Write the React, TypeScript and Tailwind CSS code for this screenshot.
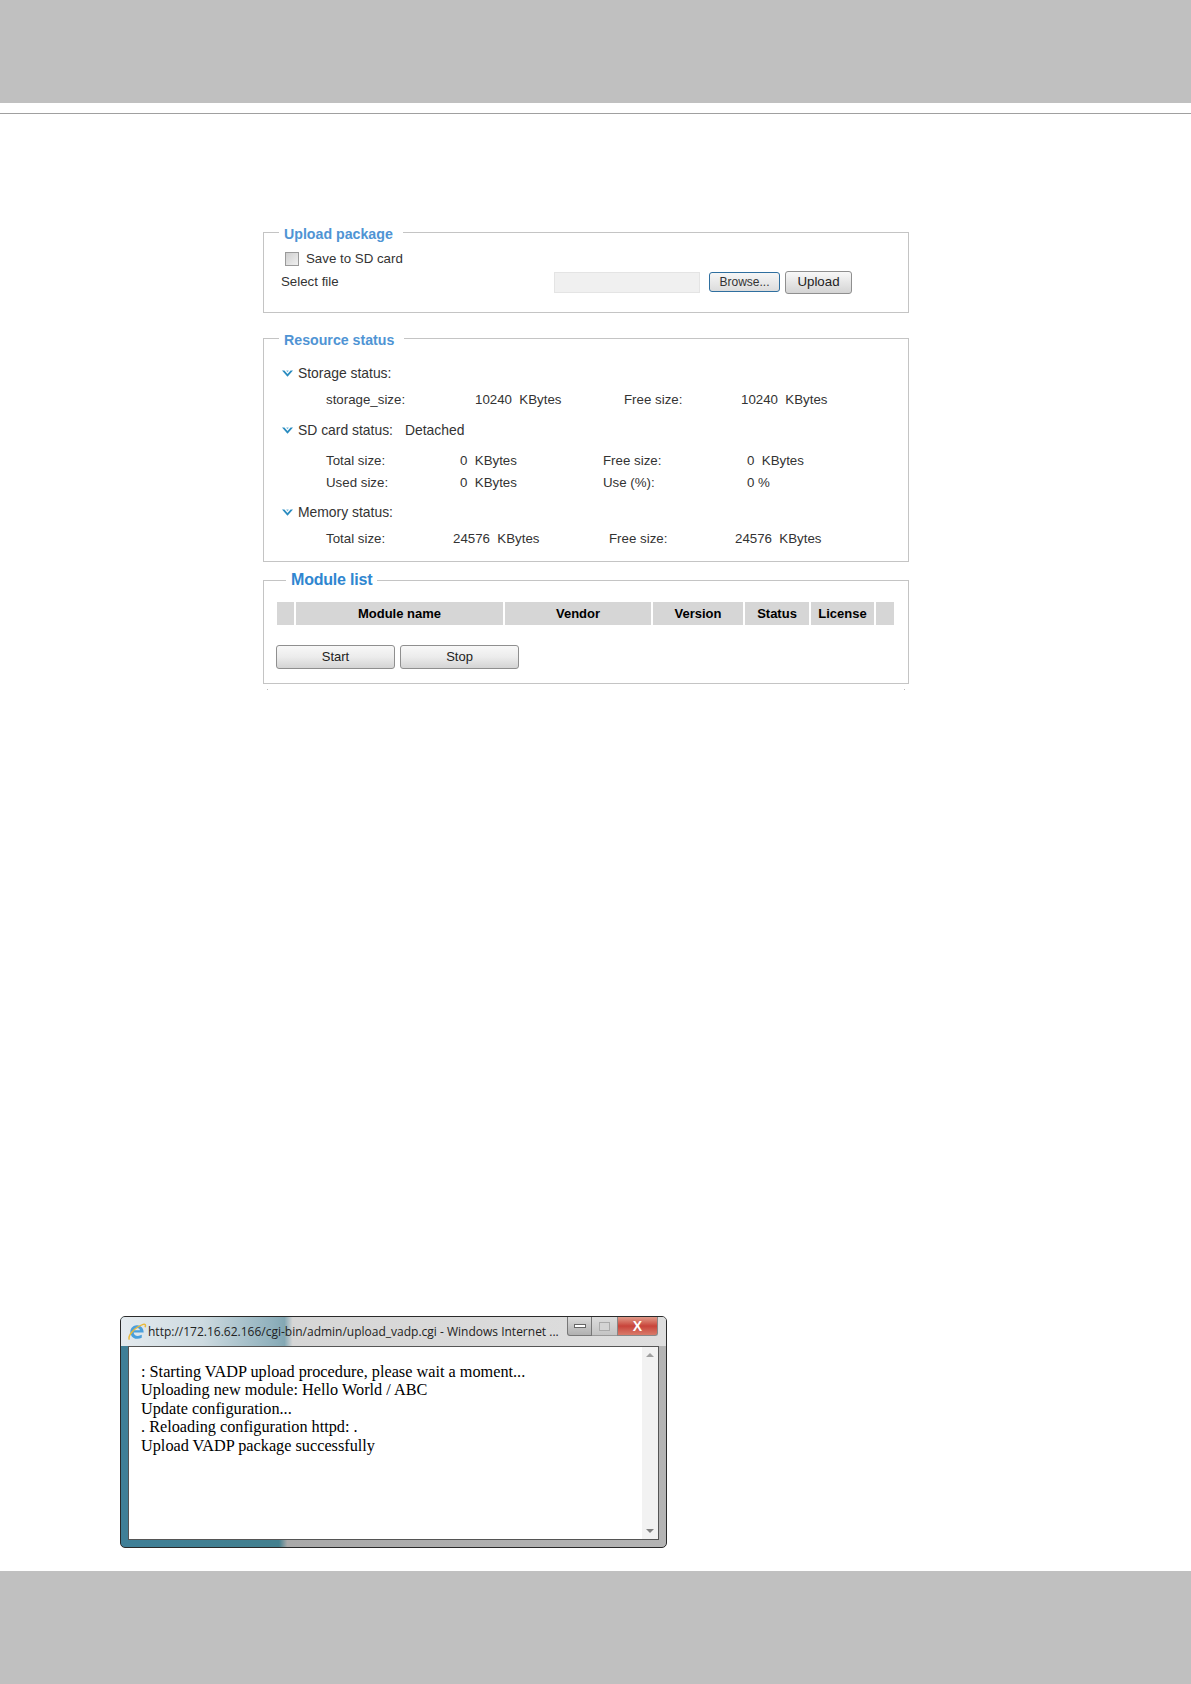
import React from 'react';

const Chevrons = () => (
  <svg width="11" height="7" viewBox="0 0 11 7" className="mr-[5px] shrink-0">
    <path d="M0 0.5 L2.4 0.5 L5.5 4 L8.6 0.5 L11 0.5 L5.5 6.8 Z" fill="#2a8cc0" />
    <path d="M4.2 0.5 L5.5 2.2 L6.8 0.5 Z" fill="#6db4d8" />
  </svg>
);

interface CellProps {
  w: string;
  children?: React.ReactNode;
}

const Row = ({ cols, className = 'h-[22px]' }: { cols: [string, string][]; className?: string }) => (
  <div className={`flex items-center whitespace-pre text-[13.3px] ${className}`}>
    {cols.map(([cls, text], i) => (
      <span key={i} className={cls}>{text}</span>
    ))}
  </div>
);

const Panel = ({ title, titleClass, className, children }: { title: string; titleClass: string; className: string; children: React.ReactNode }) => (
  <div className={`relative border border-[#c4c4c4] ${className}`}>
    <span className={`absolute bg-white leading-[18px] ${titleClass}`}>{title}</span>
    {children}
  </div>
);

const Heading = ({ label, extra }: { label: string; extra?: string }) => (
  <div className="flex items-center h-[22px] pl-[18px] text-[13.9px]">
    <Chevrons />
    <span>{label}</span>
    {extra && <span className="ml-[12px]">{extra}</span>}
  </div>
);

const HeadCell = ({ w, children }: CellProps) => (
  <div className={`${w} h-full bg-[#d6d6d6] flex items-center justify-center font-bold text-black`}>{children}</div>
);

const GreyButton = ({ children }: { children: string }) => (
  <button className="w-[119px] h-[24px] rounded-[3px] border border-[#8f8f8f] bg-gradient-to-b from-[#f8f8f8] via-[#ececec] to-[#d4d4d4] text-[#222] text-[13px]">
    {children}
  </button>
);

const IeLogo = () => (
  <svg width="20" height="20" viewBox="0 0 21 21" className="shrink-0">
    <path d="M4 13 C2 8 6 3 11 3.5 C15 4 17.5 7 17.5 11 L7 11 C7 14 11 16 15.5 13.5 L15.5 16.5 C11 19 5.5 17.5 4 13 Z M7.2 8.6 L13.6 8.6 C13.2 5.8 8 5.6 7.2 8.6 Z" fill="#4a9fdc" fillRule="evenodd" />
    <path d="M2.5 18.5 C0.5 15 7 6 17 2.5 C19 1.8 20 3 19 5.5" fill="none" stroke="#e8b93c" strokeWidth="1.6" />
  </svg>
);

const App = () => (
  <div className="w-[1191px] h-[1684px] bg-white flex flex-col font-['Liberation_Sans',Arial,sans-serif] text-[13px] text-[#333]">
    <div className="h-[103px] bg-[#c0c0c0] shrink-0" />
    <div className="h-px bg-[#a0a0a0] mt-[10px] shrink-0" />

    <div className="pl-[263px] pt-[118px]">
      <div className="w-[646px] flex flex-col">
        <Panel title="Upload package" titleClass="-top-[8px] left-[15px] pl-[5px] pr-[10px] text-[14.2px] font-bold text-[#4f94d4]" className="h-[81px]">
          <div className="flex items-center h-[20px] mt-[16px] pl-[21px] text-[13.3px]">
            <span className="w-[14px] h-[14px] border border-[#9a9a9a] bg-gradient-to-br from-[#cfcfcf] to-[#f0f0f0] mr-[7px]" />
            <span>Save to SD card</span>
          </div>
          <div className="flex items-center pl-[17px] mt-[1px] h-[24px] text-[13.3px]">
            <span className="w-[273px]">Select file</span>
            <span className="w-[146px] h-[21px] bg-[#f0f0f0] border border-[#e4e4e4]" />
            <button className="ml-[9px] w-[71px] h-[20px] rounded-[3px] border border-[#2f6f9f] bg-gradient-to-b from-[#f6f6f6] to-[#dcdcdc] text-[12px] text-[#333]">Browse...</button>
            <button className="ml-[5px] w-[67px] h-[23px] rounded-[3px] border border-[#8f8f8f] bg-gradient-to-b from-[#f8f8f8] to-[#d4d4d4] text-[#222]">Upload</button>
          </div>
        </Panel>

        <Panel title="Resource status" titleClass="-top-[8px] left-[15px] pl-[5px] pr-[10px] text-[14.2px] font-bold text-[#4f94d4]" className="h-[224px] mt-[25px]">
          <div className="pt-[23px]">
            <Heading label="Storage status:" />
            <Row className="h-[22px] mt-[5px]" cols={[['pl-[62px] w-[211px]', 'storage_size:'], ['w-[149px]', '10240  KBytes'], ['w-[117px]', 'Free size:'], ['', '10240  KBytes']]} />
            <div className="mt-[8px]"><Heading label="SD card status:" extra="Detached" /></div>
            <Row className="h-[22px] mt-[9px]" cols={[['pl-[62px] w-[196px]', 'Total size:'], ['w-[143px]', '0  KBytes'], ['w-[144px]', 'Free size:'], ['', '0  KBytes']]} />
            <Row cols={[['pl-[62px] w-[196px]', 'Used size:'], ['w-[143px]', '0  KBytes'], ['w-[144px]', 'Use (%):'], ['', '0 %']]} />
            <div className="mt-[7px]"><Heading label="Memory status:" /></div>
            <Row className="h-[22px] mt-[5px]" cols={[['pl-[62px] w-[189px]', 'Total size:'], ['w-[156px]', '24576  KBytes'], ['w-[126px]', 'Free size:'], ['', '24576  KBytes']]} />
          </div>
        </Panel>

        <Panel title="Module list" titleClass="-top-[10px] left-[22px] px-[5px] text-[16px] font-bold text-[#2f86d0] tracking-[-0.2px]" className="h-[104px] mt-[18px]">
          <div className="flex h-[23px] mt-[21px] ml-[13px] gap-[2px]">
            <HeadCell w="w-[17px]" />
            <HeadCell w="w-[207px]">Module name</HeadCell>
            <HeadCell w="w-[146px]">Vendor</HeadCell>
            <HeadCell w="w-[90px]">Version</HeadCell>
            <HeadCell w="w-[64px]">Status</HeadCell>
            <HeadCell w="w-[63px]">License</HeadCell>
            <HeadCell w="w-[18px]" />
          </div>
          <div className="flex gap-[5px] mt-[20px] ml-[12px]">
            <GreyButton>Start</GreyButton>
            <GreyButton>Stop</GreyButton>
          </div>
          {/* scan specks under the frame */}
          <div className="absolute -bottom-[7px] inset-x-[3px] flex justify-between">
            <span className="w-px h-px bg-[#bbb]" />
            <span className="w-px h-px bg-[#bbb]" />
          </div>
        </Panel>
      </div>
    </div>

    <div className="pl-[120px] mt-[632px]">
      <div className="relative w-[547px] h-[232px] rounded-[5px] border border-[#2a2a2a] bg-[linear-gradient(to_right,#3f7f97_0%,#43808f_29%,#a9a9a9_30.5%,#b4b4b4_100%)] flex flex-col px-[7px] pb-[7px] overflow-hidden">
        <div className="flex items-center h-[29px] shrink-0 -mx-[7px] pl-[6px] bg-[linear-gradient(to_right,#e4eaee_0%,#cddae0_15%,#8fb0bc_28%,#84a8b4_30%,#d6d6d6_31.5%,#dedede_100%)]">
          <IeLogo />
          <span className="ml-[1px] font-['Open_Sans',sans-serif] text-[12px] text-[#222] whitespace-nowrap">http://172.16.62.166/cgi-bin/admin/upload_vadp.cgi - Windows Internet ...</span>
        </div>
        <div className="absolute top-0 right-[8px] flex h-[19px]">
          <div className="w-[25px] rounded-bl-[3px] border border-t-0 border-[#777] bg-gradient-to-b from-[#dcdcdc] to-[#b0b0b0] flex items-center justify-center">
            <span className="w-[12px] h-[4px] bg-white border border-[#666]" />
          </div>
          <div className="w-[25px] border-b border-[#999] bg-gradient-to-b from-[#dcdcdc] to-[#c4c4c4] flex items-center justify-center">
            <span className="w-[11px] h-[9px] border border-[#aaa] bg-[#d4d4d4]" />
          </div>
          <div className="w-[41px] rounded-br-[3px] border border-t-0 border-[#888] bg-gradient-to-b from-[#e09a8a] via-[#c8433a] to-[#d87a6a] flex items-center justify-center text-[14px] font-bold leading-none text-white">X</div>
        </div>
        <div className="flex-1 flex bg-white border border-[#555] min-h-0">
          <div className="flex-1 pl-[12px] pt-[16px] font-['Liberation_Serif','Times_New_Roman',serif] text-[16.25px] leading-[18.4px] text-black whitespace-nowrap">
            <div>: Starting VADP upload procedure, please wait a moment...</div>
            <div>Uploading new module: Hello World / ABC</div>
            <div>Update configuration...</div>
            <div>. Reloading configuration httpd: .</div>
            <div>Upload VADP package successfully</div>
          </div>
          <div className="w-[16px] bg-[#f2f2f2] flex flex-col items-center justify-between py-[6px]">
            <span className="w-0 h-0 border-x-[4px] border-x-transparent border-b-[4px] border-b-[#a0a0a0]" />
            <span className="w-0 h-0 border-x-[4px] border-x-transparent border-t-[4px] border-t-[#808080]" />
          </div>
        </div>
      </div>
    </div>

    <div className="mt-auto h-[113px] bg-[#c0c0c0] shrink-0" />
  </div>
);

export default App;
